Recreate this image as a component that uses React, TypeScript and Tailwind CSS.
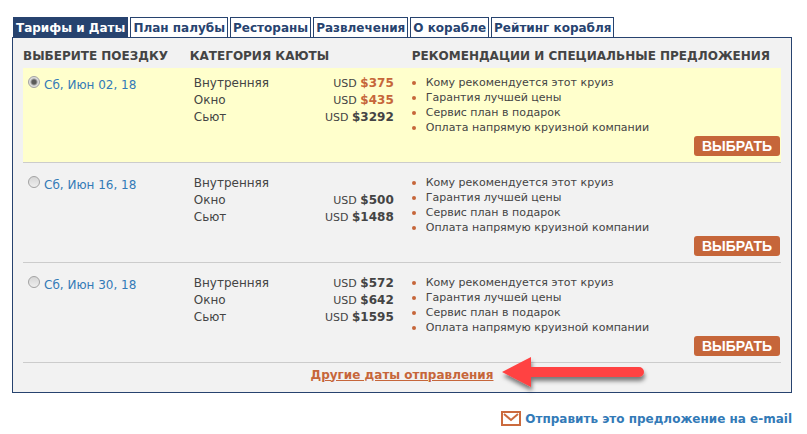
import React, { useState } from 'react';

interface Fare {
  cabin: string;
  price?: number;
  sale?: boolean;
}

interface Trip {
  id: string;
  date: string;
  fares: Fare[];
}

const tabs = [
  'Тарифы и Даты',
  'План палубы',
  'Рестораны',
  'Развлечения',
  'О корабле',
  'Рейтинг корабля',
];

const trips: Trip[] = [
  {
    id: 'jun-02',
    date: 'Сб, Июн 02, 18',
    fares: [
      { cabin: 'Внутренняя', price: 375, sale: true },
      { cabin: 'Окно', price: 435, sale: true },
      { cabin: 'Сьют', price: 3292 },
    ],
  },
  {
    id: 'jun-16',
    date: 'Сб, Июн 16, 18',
    fares: [
      { cabin: 'Внутренняя' },
      { cabin: 'Окно', price: 500 },
      { cabin: 'Сьют', price: 1488 },
    ],
  },
  {
    id: 'jun-30',
    date: 'Сб, Июн 30, 18',
    fares: [
      { cabin: 'Внутренняя', price: 572 },
      { cabin: 'Окно', price: 642 },
      { cabin: 'Сьют', price: 1595 },
    ],
  },
];

const offers = [
  'Кому рекомендуется этот круиз',
  'Гарантия лучшей цены',
  'Сервис план в подарок',
  'Оплата напрямую круизной компании',
];

const FareList: React.FC<{ fares: Fare[] }> = ({ fares }) => (
  <ul className="pt-[7px] pl-1 pr-[18px]">
    {fares.map((fare) => (
      <li key={fare.cabin} className="flex justify-between text-[12px] leading-[17px]">
        <span>{fare.cabin}</span>
        {fare.price && (
          <span>
            <span className="text-[11px]">USD </span>
            <b className={fare.sale ? 'text-[#c6663a]' : 'text-[#444]'}>${fare.price}</b>
          </span>
        )}
      </li>
    ))}
  </ul>
);

const RedArrow: React.FC = () => (
  <svg
    className="absolute left-full -top-[11px] ml-1 h-11 w-[156px] pointer-events-none"
    viewBox="0 0 156 44"
    aria-hidden="true"
  >
    <defs>
      <filter id="arrow-shadow" x="-10%" y="-20%" width="125%" height="160%">
        <feDropShadow dx="1" dy="4" stdDeviation="2" floodColor="#000" floodOpacity="0.5" />
      </filter>
    </defs>
    <path
      d="M5 18 34 3v10h108a5 5 0 0 1 0 10H34v10z"
      fill="#ff4343"
      filter="url(#arrow-shadow)"
    />
  </svg>
);

const App: React.FC = () => {
  const [activeTab, setActiveTab] = useState(tabs[0]);
  const [selected, setSelected] = useState(trips[0].id);

  return (
    <div className="bg-white pt-[17px] pl-3 pr-[15px] font-['DejaVu_Sans',Verdana,sans-serif] text-[12px] text-[#444]">
      {/* Tabs */}
      <nav className="flex gap-0.5 pl-px">
        {tabs.map((tab) => (
          <button
            key={tab}
            type="button"
            onClick={() => setActiveTab(tab)}
            className={`h-5 border border-b-0 border-[#27436f] px-0.5 text-[12px] leading-5 font-bold whitespace-nowrap ${
              tab === activeTab ? 'bg-[#27436f] text-white' : 'bg-white text-[#27436f]'
            }`}
          >
            {tab}
          </button>
        ))}
      </nav>

      {/* Trips */}
      <section className="border border-[#27436f] bg-[#f2f2f2] px-2.5 pt-2">
        <table className="w-full table-fixed border-collapse">
          <colgroup>
            <col className="w-[22%]" />
            <col className="w-[222px]" />
            <col />
          </colgroup>
          <thead>
            <tr className="h-[22px] text-left align-top leading-5 whitespace-nowrap">
              <th>ВЫБЕРИТЕ ПОЕЗДКУ</th>
              <th>КАТЕГОРИЯ КАЮТЫ</th>
              <th>РЕКОМЕНДАЦИИ И СПЕЦИАЛЬНЫЕ ПРЕДЛОЖЕНИЯ</th>
            </tr>
          </thead>
          {trips.map((trip, i) => (
            <tbody key={trip.id}>
              {i > 0 && <tr className="h-1.5"><td colSpan={3} /></tr>}
              <tr
                className={`h-[94px] border-b border-[#ccc] align-top ${
                  trip.id === selected ? 'bg-[#ffffcc]' : ''
                }`}
              >
                <td>
                  <label className="flex items-start gap-1 pt-2 pl-[5px] text-[#337ab7]">
                    <input
                      type="radio"
                      name="trip"
                      checked={trip.id === selected}
                      onChange={() => setSelected(trip.id)}
                      className="size-3 shrink-0 appearance-none rounded-full border border-[#a3a3a3] bg-linear-to-b from-[#d6d6d6] to-[#eee] checked:bg-[radial-gradient(circle,#5a5a5a_2px,#ddd_4px)]"
                    />
                    <span className="leading-[18px]">{trip.date}</span>
                  </label>
                </td>
                <td>
                  <FareList fares={trip.fares} />
                </td>
                <td>
                  <ul className="pt-[7px] text-[11px] leading-[15px]">
                    {offers.map((offer) => (
                      <li key={offer} className="flex items-center gap-2.5 whitespace-nowrap">
                        <span className="size-1 shrink-0 rounded-full bg-[#c6663a]" />
                        {offer}
                      </li>
                    ))}
                  </ul>
                  <div className="flex justify-end pt-px pr-px">
                    <button
                      type="button"
                      className="h-5 rounded-[3px] bg-[#c6663a] px-2 font-['Liberation_Sans',Arial,sans-serif] text-[14px] leading-5 font-bold text-white"
                    >
                      ВЫБРАТЬ
                    </button>
                  </div>
                </td>
              </tr>
            </tbody>
          ))}
        </table>

        <div className="flex justify-center pt-0.5 pb-[7px]">
          <span className="relative">
            <a href="#dates" className="leading-5 font-bold text-[#c6663a] underline">
              Другие даты отправления
            </a>
            <RedArrow />
          </span>
        </div>
      </section>

      {/* Share */}
      <div className="flex justify-end pt-4">
        <a href="#email" className="flex items-center gap-1 leading-5 font-bold text-[#337ab7]">
          <svg className="h-[15px] w-5" viewBox="0 0 20 15" fill="none" stroke="#cb6a3d" aria-hidden="true">
            <rect x="1" y="1" width="18" height="13" strokeWidth="2" fill="#fff" />
            <path d="M3 3l7 6 7-6" strokeWidth="2" />
          </svg>
          Отправить это предложение на e-mail
        </a>
      </div>
    </div>
  );
};

export default App;
